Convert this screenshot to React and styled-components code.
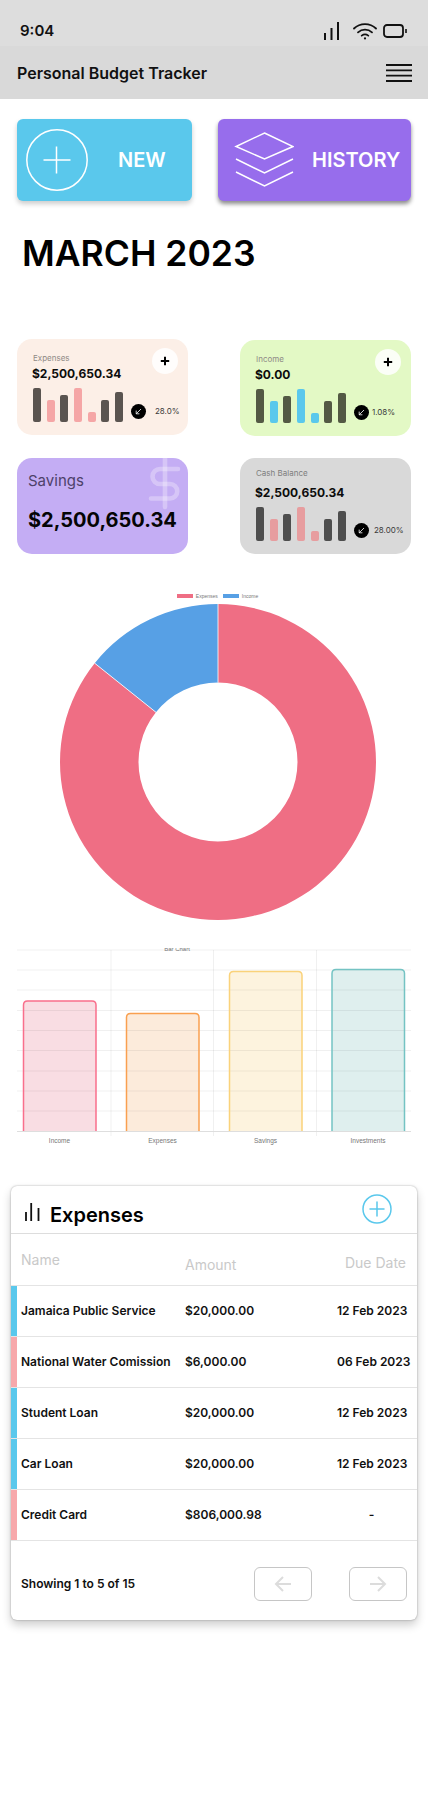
import React from "react";
import styled, { createGlobalStyle } from "styled-components";

const Global = createGlobalStyle`
  html, body { margin: 0; padding: 0; background: #fff; }
  body { font-family: Inter, "Liberation Sans", sans-serif; color: #000; }
  * { box-sizing: border-box; }
`;

const Page = styled.div`
  width: 428px;
  min-height: 1809px;
  background: #fff;
  overflow: hidden;
`;
const StatusBar = styled.div`
  height: 46px;
  background: #ddd;
  padding: 16px 21px 0 20px;
  display: flex;
  align-items: center;
  justify-content: space-between;
`;
const Time = styled.span`
  font-size: 15px;
  font-weight: 600;
  line-height: 18px;
  color: #111;
`;
const StatusIcons = styled.div`
  display: flex;
  align-items: center;
  gap: 6px;
  & > svg:first-child { margin-right: 8px; }
`;
const TopBar = styled.header`
  height: 53px;
  background: #d9d9d9;
  padding: 0 16px 0 17px;
  display: flex;
  align-items: center;
  justify-content: space-between;
`;
const AppTitle = styled.h1`
  margin: 0;
  font-size: 16px;
  font-weight: 600;
  line-height: 20px;
  color: #111;
`;
const Actions = styled.div`
  margin-top: 20px;
  padding: 0 17px;
  display: flex;
  justify-content: space-between;
`;
const ActionButton = styled.button`
  width: ${(p) => p.$w}px;
  height: 82px;
  border: 0;
  border-radius: 6px;
  background: ${(p) => p.$bg};
  box-shadow: ${(p) => p.$shadow};
  color: #fff;
  display: flex;
  align-items: center;
  padding: 0 0 0 ${(p) => p.$pad}px;
  gap: ${(p) => p.$gap}px;
  font-family: inherit;
  font-size: 20px;
  font-weight: 600;
  line-height: 24px;
`;
const Month = styled.h2`
  margin: 31px 0 0 22px;
  font-size: 35.5px;
  font-weight: 600;
  line-height: 44px;
  letter-spacing: 0;
`;
const Stats = styled.section`
  margin-top: 64px;
  padding: 0 17px;
  display: grid;
  grid-template-columns: 171px 171px;
  justify-content: space-between;
  row-gap: 22px;
`;
const StatCard = styled.div`
  position: relative;
  height: 96px;
  border-radius: 15px;
  overflow: hidden;
  background: ${(p) => p.$bg};
  margin-top: ${(p) => p.$lift || 0}px;
  padding: ${(p) => p.$top || 14}px 0 0 16px;
`;
const StatLabel = styled.div`
  font-size: 8px;
  line-height: 10px;
  color: ${(p) => p.$color || "#8f8a86"};
`;
const StatValue = styled.div`
  margin: ${(p) => p.$gap || 3}px 0 0 -1px;
  font-size: 12px;
  font-weight: 700;
  line-height: 16px;
  color: #0c0c0c;
`;
const ChartRow = styled.div`
  margin-top: ${(p) => p.$gap || 6}px;
  display: flex;
  align-items: flex-end;
`;
const Bars = styled.div`
  height: 34px;
  display: flex;
  align-items: flex-end;
  gap: 5.67px;
`;
const Bar = styled.i`
  display: block;
  width: 8px;
  height: ${(p) => p.$h}px;
  border-radius: 2px;
  background: ${(p) => p.$color};
`;
const TrendDot = styled.span`
  width: 15px;
  height: 15px;
  margin: 0 0 3px 8px;
  border-radius: 50%;
  background: #000;
  display: flex;
  align-items: center;
  justify-content: center;
`;
const Percent = styled.span`
  margin: 0 0 5px ${(p) => p.$gap}px;
  font-size: 8px;
  line-height: 11px;
  color: #3a3a3a;
`;
const AddBubble = styled.span`
  position: absolute;
  top: 9px;
  right: 10px;
  width: 26px;
  height: 26px;
  border-radius: 50%;
  background: rgba(255, 255, 255, 0.85);
  display: flex;
  align-items: center;
  justify-content: center;
`;
const SavingsCard = styled(StatCard)`
  padding: 14px 0 0 11px;
`;
const SavingsLabel = styled.div`
  font-size: 15px;
  line-height: 18px;
  color: #4d4169;
`;
const SavingsValue = styled.div`
  margin-top: 16px;
  font-size: 20px;
  font-weight: 700;
  line-height: 28px;
  color: #050505;
`;
const Watermark = styled.svg`
  position: absolute;
  top: 0;
  left: 131px;
`;
const DonutBlock = styled.section`
  margin-top: 39px;
  padding-left: 7px;
  display: flex;
  flex-direction: column;
  align-items: center;
`;
const Legend = styled.div`
  height: 6px;
  display: flex;
  align-items: center;
  gap: 5px;
`;
const LegendItem = styled.span`
  display: flex;
  align-items: center;
  gap: 3px;
  font-family: "Liberation Sans", sans-serif;
  font-size: 5px;
  line-height: 6px;
  color: #777;
`;
const Swatch = styled.i`
  display: block;
  width: 16px;
  height: 4px;
  background: ${(p) => p.$color};
`;
const Donut = styled.svg`
  display: block;
  margin-top: 5px;
`;
const BarChart = styled.svg`
  display: block;
  margin: 28px 0 0 17px;
`;
const TableCard = styled.section`
  margin: 36px 11px 0;
  width: 406px;
  border-radius: 6px;
  background: #fff;
  box-shadow: 0 0 2px rgba(0, 0, 0, 0.35), 0 5px 10px rgba(0, 0, 0, 0.2);
`;
const TableTop = styled.div`
  height: 48px;
  padding: 0 25px 0 14px;
  border-bottom: 1px solid #ddd;
  display: flex;
  justify-content: space-between;
  align-items: flex-start;
`;
const TableTitle = styled.div`
  margin-top: 15px;
  display: flex;
  align-items: center;
  gap: 10px;
  font-size: 20px;
  font-weight: 600;
  line-height: 28px;
`;
const TitleIcon = styled.svg`
  margin-bottom: 6px;
`;
const AddRound = styled.svg`
  margin-top: 8px;
`;
const Row = styled.div`
  height: 51px;
  display: grid;
  grid-template-columns: 6px 168px 1fr 80px;
  border-bottom: 1px solid #e4e4e4;
  align-items: center;
  font-size: 12px;
  font-weight: 600;
  color: #111;
`;
const HeadRow = styled(Row)`
  height: 52px;
  align-items: start;
  font-size: 14px;
  font-weight: 400;
  color: #c9c9c9;
`;
const Strip = styled.i`
  display: block;
  align-self: stretch;
  background: ${(p) => p.$color};
`;
const Name = styled.div`
  padding: ${(p) => (p.$head ? "17px" : "0")} 0 0 4px;
  line-height: 18px;
`;
const Amount = styled.div`
  padding-top: ${(p) => (p.$head ? "22px" : "0")};
  margin-bottom: ${(p) => (p.$head ? "0" : "1px")};
  line-height: 18px;
`;
const Due = styled.div`
  padding: ${(p) => (p.$head ? "20px" : "0")} 11px 0 0;
  line-height: 18px;
  text-align: ${(p) => (p.$dash ? "center" : "right")};
  white-space: nowrap;
`;
const Footer = styled.div`
  height: 79px;
  padding: 6px 10px 0;
  display: flex;
  align-items: center;
  justify-content: space-between;
  font-size: 12px;
  font-weight: 600;
  color: #111;
`;
const Pager = styled.div`
  display: flex;
  gap: 37px;
`;
const PageButton = styled.button`
  width: 58px;
  height: 34px;
  border: 1px solid #c6c6c6;
  border-radius: 6px;
  background: #fff;
  display: flex;
  align-items: center;
  justify-content: center;
  padding: 0;
`;

const Signal = () => (
  <svg width="15" height="18" viewBox="0 0 15 18">
    <g fill="#111">
      <rect x="0" y="11" width="2" height="7" />
      <rect x="6.5" y="6" width="2" height="12" />
      <rect x="13" y="0" width="2" height="18" />
    </g>
  </svg>
);
const Wifi = () => (
  <svg width="24" height="18" viewBox="0 0 24 18" fill="none" stroke="#111" strokeWidth="1.8" strokeLinecap="round">
    <path d="M1 6.5C7 .6 17 .6 23 6.5" />
    <path d="M5 10.3c4-3.6 10-3.6 14 0" />
    <path d="M8.7 13.6c2-1.5 4.6-1.5 6.6 0" />
    <circle cx="12" cy="16.4" r="1.1" fill="#111" stroke="none" />
  </svg>
);
const Battery = () => (
  <svg width="24" height="14" viewBox="0 0 24 14" fill="none">
    <rect x="1" y="1" width="19" height="12" rx="3" stroke="#111" strokeWidth="1.8" />
    <rect x="22.2" y="5" width="1.6" height="4" fill="#111" />
  </svg>
);
const Menu = () => (
  <svg width="26" height="18" viewBox="0 0 26 18" stroke="#111" strokeWidth="1.8">
    <path d="M0 1h26M0 6.4h26M0 11.7h26M0 17h26" />
  </svg>
);
const PlusCircle = () => (
  <svg width="62" height="62" viewBox="0 0 62 62" fill="none" stroke="#fff" strokeWidth="1.5">
    <circle cx="31" cy="31" r="30.2" />
    <path d="M17.5 31h27M30.5 17.5v27" />
  </svg>
);
const Layers = () => (
  <svg width="60" height="56" viewBox="0 0 60 56" fill="none" stroke="#fff" strokeWidth="1.5">
    <path d="M30.5 1 59 14.5 30.5 27 2 14.5Z" />
    <path d="M2 27l28.5 14L59 27" />
    <path d="M2 40l28.5 14L59 40" />
  </svg>
);
const Plus = () => (
  <svg width="10" height="10" viewBox="0 0 10 10" stroke="#000" strokeWidth="2">
    <path d="M0.8 5h8.4M5 .8v8.4" />
  </svg>
);
const Trend = () => (
  <svg width="7" height="7" viewBox="0 0 7 7" fill="none" stroke="#fff" strokeWidth="0.8">
    <path d="M6 1 1.2 5.8M1.2 2.6v3.2h3.2" />
  </svg>
);

const heights = [34, 22, 27, 34, 10, 22, 30];
const MiniBars = ({ dark, light }) => (
  <Bars>
    {heights.map((h, i) => (
      <Bar key={i} $h={h} $color={[1, 3, 4].includes(i) ? light : dark} />
    ))}
  </Bars>
);

const polar = (r, deg) => {
  const a = (deg * Math.PI) / 180;
  return `${158 + r * Math.sin(a)} ${158 - r * Math.cos(a)}`;
};
const arc = (from, to, large) =>
  `M${polar(158, from)}A158 158 0 ${large} 1 ${polar(158, to)}L${polar(79.5, to)}A79.5 79.5 0 ${large} 0 ${polar(79.5, from)}Z`;

const chartBars = [
  { x: 23.5, top: 1001, label: "Income", c: "#f96f8c", f: "#f9dde3" },
  { x: 126.5, top: 1013.5, label: "Expenses", c: "#f9a050", f: "#fcebdb" },
  { x: 229.5, top: 971.5, label: "Savings", c: "#fad27a", f: "#fdf3de" },
  { x: 332, top: 969.5, label: "Investments", c: "#74c3c3", f: "#dfefee" },
];
const gridY = [950, 970, 990, 1010.5, 1030.5, 1050.5, 1071, 1091, 1111];

const rows = [
  ["Jamaica Public Service", "$20,000.00", "12 Feb 2023", "#5ac8ec"],
  ["National Water Comission", "$6,000.00", "06 Feb 2023", "#f7a8ab"],
  ["Student Loan", "$20,000.00", "12 Feb 2023", "#5ac8ec"],
  ["Car Loan", "$20,000.00", "12 Feb 2023", "#5ac8ec"],
  ["Credit Card", "$806,000.98", "-", "#f7a8ab"],
];

export default function App() {
  return (
    <Page>
      <Global />
      <StatusBar>
        <Time>9:04</Time>
        <StatusIcons>
          <Signal />
          <Wifi />
          <Battery />
        </StatusIcons>
      </StatusBar>
      <TopBar>
        <AppTitle>Personal Budget Tracker</AppTitle>
        <Menu />
      </TopBar>
      <Actions>
        <ActionButton $w={175} $bg="#5ac8ec" $pad={9} $gap={30} $shadow="0 3px 5px rgba(0,0,0,.2)">
          <PlusCircle />
          NEW
        </ActionButton>
        <ActionButton $w={193} $bg="#976dec" $pad={16} $gap={18} $shadow="0 3px 4px rgba(0,0,0,.45)">
          <Layers />
          HISTORY
        </ActionButton>
      </Actions>
      <Month>MARCH 2023</Month>
      <Stats>
        <StatCard $bg="#fcefe7" $lift={-1}>
          <StatLabel>Expenses</StatLabel>
          <StatValue>$2,500,650.34</StatValue>
          <ChartRow>
            <MiniBars dark="#5a5450" light="#f5a6a6" />
            <TrendDot><Trend /></TrendDot>
            <Percent $gap={9}>28.0%</Percent>
          </ChartRow>
          <AddBubble><Plus /></AddBubble>
        </StatCard>
        <StatCard $bg="#e3f9c5">
          <StatLabel>Income</StatLabel>
          <StatValue>$0.00</StatValue>
          <ChartRow>
            <MiniBars dark="#535944" light="#5ac8ec" />
            <TrendDot><Trend /></TrendDot>
            <Percent $gap={3}>1.08%</Percent>
          </ChartRow>
          <AddBubble><Plus /></AddBubble>
        </StatCard>
        <SavingsCard $bg="#c4adf4">
          <SavingsLabel>Savings</SavingsLabel>
          <SavingsValue>$2,500,650.34</SavingsValue>
          <Watermark width="34" height="52" viewBox="0 0 34 52" fill="none" stroke="#fff" strokeOpacity="0.3" strokeWidth="4.6" strokeLinecap="round">
            <path d="M30 11H12a7.5 7.5 0 0 0 0 15h10a7.25 7.25 0 0 1 0 14.5H3" />
            <path d="M17 -3V49" />
          </Watermark>
        </SavingsCard>
        <StatCard $bg="#d9d9d9" $top={10}>
          <StatLabel $color="#7d7d7d">Cash Balance</StatLabel>
          <StatValue $gap={7}>$2,500,650.34</StatValue>
          <ChartRow $gap={6}>
            <MiniBars dark="#4e4e4e" light="#e79d9f" />
            <TrendDot><Trend /></TrendDot>
            <Percent $gap={5}>28.00%</Percent>
          </ChartRow>
        </StatCard>
      </Stats>
      <DonutBlock>
        <Legend>
          <LegendItem><Swatch $color="#ef6e84" />Expenses</LegendItem>
          <LegendItem><Swatch $color="#57a0e5" />Income</LegendItem>
        </Legend>
        <Donut width="316" height="316" viewBox="0 0 316 316">
          <path d={arc(0, 308.7, 1)} fill="#ef6e84" />
          <path d={arc(308.7, 360, 0)} fill="#57a0e5" />
          <path d={`M${polar(79.5, 0)}L${polar(158, 0)}M${polar(79.5, 308.7)}L${polar(158, 308.7)}`} stroke="#fff" strokeWidth="0.8" />
        </Donut>
      </DonutBlock>
      <BarChart width="394" height="202" viewBox="17 948 394 202">
        <text x="177" y="950.5" textAnchor="middle" fontSize="6" fill="#777" fontFamily="Liberation Sans, sans-serif">Bar Chart</text>
        {chartBars.map((b) => (
          <path
            key={b.label}
            d={`M${b.x} 1131V${b.top + 4}q0 -4 4 -4H${b.x + 68.5}q4 0 4 4V1131Z`}
            fill={b.f}
          />
        ))}
        {gridY.map((y) => (
          <path key={y} d={`M17 ${y}H411`} stroke="#000" strokeOpacity="0.06" strokeWidth="1" />
        ))}
        {[111, 213.5, 316.5].map((x) => (
          <path key={x} d={`M${x} 950V1136`} stroke="#000" strokeOpacity="0.06" strokeWidth="1" />
        ))}
        <path d="M17 1131.5H411" stroke="#dedede" strokeWidth="1" />
        {chartBars.map((b) => (
          <g key={b.label}>
            <path
              d={`M${b.x} 1131V${b.top + 4}q0 -4 4 -4H${b.x + 68.5}q4 0 4 4V1131`}
              fill="none"
              stroke={b.c}
              strokeWidth="1.5"
            />
            <text x={b.x + 36} y="1143" textAnchor="middle" fontSize="6.5" fill="#777" fontFamily="Liberation Sans, sans-serif">
              {b.label}
            </text>
          </g>
        ))}
      </BarChart>
      <TableCard>
        <TableTop>
          <TableTitle>
            <TitleIcon width="15" height="18" viewBox="0 0 15 18" stroke="#111" strokeWidth="1.8">
              <path d="M1 9v9M6.2 0v18M13.5 5v13" />
            </TitleIcon>
            Expenses
          </TableTitle>
          <AddRound width="30" height="30" viewBox="0 0 30 30" fill="none" stroke="#5ac8ec" strokeWidth="1.5" strokeLinecap="round">
            <circle cx="15" cy="15" r="14" />
            <path d="M8 15h14M15 8v14" />
          </AddRound>
        </TableTop>
        <HeadRow>
          <span />
          <Name $head>Name</Name>
          <Amount $head>Amount</Amount>
          <Due $head>Due Date</Due>
        </HeadRow>
        {rows.map(([n, a, d, c]) => (
          <Row key={n}>
            <Strip $color={c} />
            <Name>{n}</Name>
            <Amount>{a}</Amount>
            <Due $dash={d === "-"}>{d}</Due>
          </Row>
        ))}
        <Footer>
          Showing 1 to 5 of 15
          <Pager>
            <PageButton aria-label="Previous">
              <svg width="18" height="16" viewBox="0 0 18 16" fill="none" stroke="#dcdcdc" strokeWidth="2">
                <path d="M17 8H2M9 1 2 8l7 7" />
              </svg>
            </PageButton>
            <PageButton aria-label="Next">
              <svg width="18" height="16" viewBox="0 0 18 16" fill="none" stroke="#dcdcdc" strokeWidth="2">
                <path d="M1 8h15M9 1l7 7-7 7" />
              </svg>
            </PageButton>
          </Pager>
        </Footer>
      </TableCard>
    </Page>
  );
}
